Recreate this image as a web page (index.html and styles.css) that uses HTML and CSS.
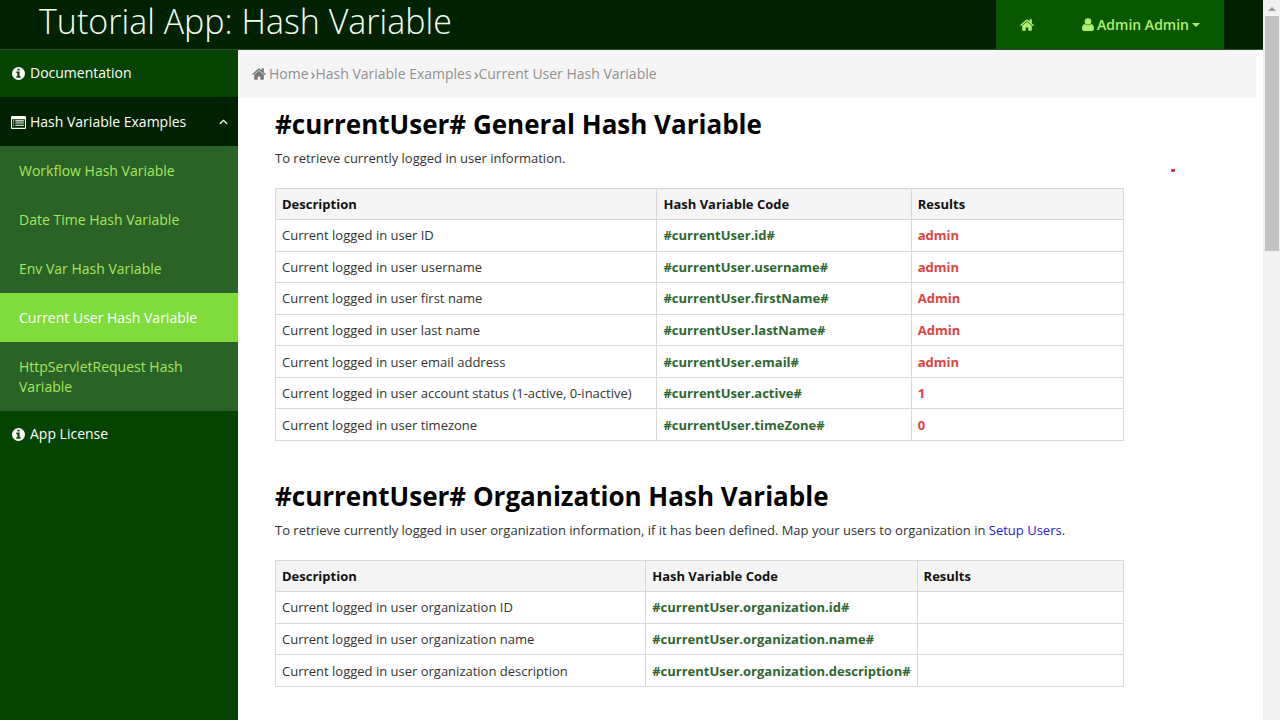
FILE: index.html
```html
<!DOCTYPE html>
<html lang="en">
<head>
  <meta charset="UTF-8" />
  <meta name="viewport" content="width=device-width, initial-scale=1.0"/>
  <title>Tutorial App: Hash Variable</title>
  <link rel="stylesheet" href="styles.css">
</head>
<body>
  <!-- Shared icons -->
  <svg class="sprite" aria-hidden="true">
    <symbol id="icon-home" viewBox="0 0 14 12">
      <path d="M7 2.800 2.200 6.800V11.200c0 .3.2.5.5.5h3V8.400h2.600v3.300h3c.3 0 .5-.2.5-.5V6.800z"/>
      <path d="M13.800 5.900 11.800 4.200V.6c0-.2-.1-.3-.3-.3H9.900c-.2 0-.3.1-.3.3v1.700L7.800.8c-.5-.4-1.100-.4-1.600 0L.2 5.900c-.1.1-.2.3 0 .4l.5.6c.1.1.3.1.4 0L7 2.100l5.900 4.800c.1.1.3.1.4 0l.5-.6c.1-.1.1-.3 0-.4z"/>
    </symbol>
    <symbol id="icon-info" viewBox="0 0 12 12">
      <path fill-rule="evenodd" d="M6 0a6 6 0 1 0 0 12A6 6 0 0 0 6 0zM5 1.600h2v1.600H5zM4 4.200h3v4.400h1V10H4V8.600h1V5.600H4z"/>
    </symbol>
    <symbol id="icon-list" viewBox="0 0 14 12">
      <path fill-rule="evenodd" d="M1.200 0h11.600C13.500 0 14 .5 14 1.200v9.600c0 .7-.5 1.200-1.200 1.200H1.200C.5 12 0 11.500 0 10.800V1.200C0 .5.5 0 1.200 0zM1 3v7.700c0 .2.1.3.3.3h11.400c.2 0 .3-.1.3-.3V3z"/>
      <path d="M2 4h1v1H2zM4 4h8v1H4zM2 6h1v1H2zM4 6h8v1H4zM2 8h1v1H2zM4 8h8v1H4z"/>
    </symbol>
    <symbol id="icon-user" viewBox="0 0 12 13">
      <circle cx="6" cy="3.500" r="3.300"/>
      <path d="M3 6c-2.100.3-3 2.200-3 4.600C0 12 .9 13 2.200 13h7.600c1.300 0 2.200-1 2.200-2.400C12 8.200 11.100 6.300 9 6c-.8.8-1.800 1.200-3 1.200S3.800 6.800 3 6z"/>
    </symbol>
  </svg>

  <div class="page">
    <header class="topbar">
      <h1>Tutorial App: Hash Variable</h1>
      <nav class="user-nav">
        <a href="#" class="home-link" aria-label="Home"><svg class="icon icon-wide"><use href="#icon-home"/></svg></a>
        <button type="button" class="user-btn">
          <svg class="icon icon-user"><use href="#icon-user"/></svg>
          Admin Admin
          <span class="caret"></span>
        </button>
      </nav>
    </header>

    <div class="layout">
      <!-- Sidebar -->
      <nav class="sidebar">
        <a href="#" class="menu-item"><svg class="icon icon-info"><use href="#icon-info"/></svg>Documentation</a>
        <button type="button" class="menu-item menu-open" aria-expanded="true">
          <svg class="icon icon-list"><use href="#icon-list"/></svg>Hash Variable Examples
          <svg class="chevron" viewBox="0 0 10 6"><path d="M1 5 5 1.200 9 5"/></svg>
        </button>
        <div class="submenu">
          <a href="#">Workflow Hash Variable</a>
          <a href="#">Date Time Hash Variable</a>
          <a href="#">Env Var Hash Variable</a>
          <a href="#" class="active">Current User Hash Variable</a>
          <a href="#">HttpServletRequest Hash Variable</a>
        </div>
        <a href="#" class="menu-item"><svg class="icon icon-info"><use href="#icon-info"/></svg>App License</a>
      </nav>

      <main class="main">
        <nav class="breadcrumb">
          <svg class="icon icon-wide"><use href="#icon-home"/></svg>
          <a href="#">Home</a><span class="sep">›</span><a href="#">Hash Variable Examples</a><span class="sep">›</span><a href="#">Current User Hash Variable</a>
        </nav>

        <section class="section">
          <h2>#currentUser# General Hash Variable</h2>
          <p>To retrieve currently logged in user information.</p>
          <table class="general">
            <thead>
              <tr><th>Description</th><th>Hash Variable Code</th><th>Results</th></tr>
            </thead>
            <tbody>
              <tr><td>Current logged in user ID</td><td class="code">#currentUser.id#</td><td class="result">admin</td></tr>
              <tr><td>Current logged in user username</td><td class="code">#currentUser.username#</td><td class="result">admin</td></tr>
              <tr><td>Current logged in user first name</td><td class="code">#currentUser.firstName#</td><td class="result">Admin</td></tr>
              <tr><td>Current logged in user last name</td><td class="code">#currentUser.lastName#</td><td class="result">Admin</td></tr>
              <tr><td>Current logged in user email address</td><td class="code">#currentUser.email#</td><td class="result">admin</td></tr>
              <tr><td>Current logged in user account status (1-active, 0-inactive)</td><td class="code">#currentUser.active#</td><td class="result">1</td></tr>
              <tr><td>Current logged in user timezone</td><td class="code">#currentUser.timeZone#</td><td class="result">0</td></tr>
            </tbody>
          </table>
          <span class="marker"></span>
        </section>

        <section class="section">
          <h2>#currentUser# Organization Hash Variable</h2>
          <p>To retrieve currently logged in user organization information, if it has been defined. Map your users to organization in <a href="#">Setup Users</a>.</p>
          <table class="organization">
            <thead>
              <tr><th>Description</th><th>Hash Variable Code</th><th>Results</th></tr>
            </thead>
            <tbody>
              <tr><td>Current logged in user organization ID</td><td class="code">#currentUser.organization.id#</td><td class="result"></td></tr>
              <tr><td>Current logged in user organization name</td><td class="code">#currentUser.organization.name#</td><td class="result"></td></tr>
              <tr><td>Current logged in user organization description</td><td class="code">#currentUser.organization.description#</td><td class="result"></td></tr>
            </tbody>
          </table>
        </section>
      </main>
    </div>
  </div>

  <div class="scrollbar">
    <span class="scroll-arrow"></span>
    <span class="scroll-thumb"></span>
  </div>
</body>
</html>
```

FILE: styles.css
```css
:root {
  --darkest: #002200;
  --dark: #044400;
  --nav: #085800;
  --submenu: #2b6228;
  --lime: #a6e65c;
  --active: #80dc3c;
  --grey: #f5f5f5;
  --border: #d8d8d8;
}

* {
  box-sizing: border-box;
}

body {
  margin: 0;
  display: flex;
  height: 100vh;
  overflow: hidden;
  font-family: 'Open Sans', sans-serif;
  font-size: 14px;
  line-height: 20px;
  color: #333;
  background: #fff;
}

a {
  color: inherit;
  text-decoration: none;
}

button {
  border: none;
  font: inherit;
  cursor: pointer;
}

.sprite {
  display: none;
}

.icon {
  width: 12px;
  height: 12px;
  fill: currentColor;
  flex: none;
}

.icon-wide {
  width: 14px;
}

.icon-info {
  width: 13px;
  height: 13px;
}

.icon-list {
  width: 15px;
  height: 13px;
}

.page {
  flex: 1;
  min-width: 0;
  display: flex;
  flex-direction: column;
}

/* Top bar */
.topbar {
  display: flex;
  justify-content: space-between;
  height: 50px;
  padding: 0 39px;
  background: var(--darkest);
  border-bottom: 1px solid #2b4a2b;
  flex: none;
}

.topbar h1 {
  margin: 0;
  font-size: 34px;
  font-weight: 300;
  line-height: 42px;
  color: #f4fff0;
}

.user-nav {
  display: flex;
  background: var(--nav);
  color: #b0f070;
  font-weight: 600;
}

.home-link,
.user-btn {
  display: flex;
  align-items: center;
  padding: 0 24px;
}

.user-btn {
  gap: 3px;
  background: none;
  color: inherit;
}

.user-nav .icon-user {
  height: 13px;
}

.caret {
  border: 4px solid transparent;
  border-top-color: currentColor;
  border-bottom: none;
}

/* Sidebar */
.layout {
  flex: 1;
  display: flex;
}

.sidebar {
  width: 238px;
  flex: none;
  background: var(--dark);
  color: #fff;
}

.menu-item {
  display: flex;
  align-items: center;
  width: 100%;
  gap: 5px;
  padding: 13px 10px 14px 12px;
  background: none;
  color: inherit;
}

.menu-open {
  gap: 4px;
  padding: 15px 10px 14px 11px;
  background: var(--darkest);
}

.chevron {
  width: 9px;
  height: 6px;
  margin-left: auto;
  fill: none;
  stroke: currentColor;
  stroke-width: 1.5;
}

.submenu {
  background: var(--submenu);
  color: var(--lime);
}

.submenu a {
  display: block;
  padding: 15px 19px 14px;
}

.submenu .active {
  background: var(--active);
  color: #fff;
}

/* Content */
.main {
  flex: 1;
  min-width: 0;
}

.breadcrumb {
  display: flex;
  align-items: center;
  height: 48px;
  margin-right: 7px;
  padding-left: 14px;
  background: var(--grey);
  color: #909090;
}

.breadcrumb .icon {
  margin-right: 3px;
  fill: #777;
}

.sep {
  margin-left: 2px;
  font-size: 16px;
  color: #777;
}

.section {
  position: relative;
  padding: 7px 45px 29px 37px;
}

.section h2 {
  margin: 0;
  font-size: 26px;
  line-height: 38px;
  color: #000;
}

.section p {
  margin: 6px 0 21px;
  font-size: 13px;
  line-height: 18px;
}

.section p a {
  color: #2222cc;
}

table {
  width: 90%;
  border-collapse: collapse;
  font-size: 13px;
  line-height: 18px;
}

.general {
  height: 253px;
}

.organization {
  height: 127px;
}

th,
td {
  padding: 5px 6px;
  border: 1px solid var(--border);
  text-align: left;
}

th {
  padding: 6px;
  background: var(--grey);
  color: #111;
}

th:nth-child(1) {
  width: 45%;
}

th:nth-child(2) {
  width: 30%;
}

th:nth-child(3) {
  width: 25%;
}

.code {
  color: #2f6632;
  font-weight: 700;
}

.result {
  color: #dc4444;
  font-weight: 700;
}

.marker {
  position: absolute;
  top: 71px;
  right: 88px;
  width: 4px;
  height: 3px;
  border-radius: 1px;
  background: #d83040;
}

/* Scrollbar */
.scrollbar {
  display: flex;
  flex-direction: column;
  align-items: center;
  width: 17px;
  background: #f1f1f1;
}

.scroll-arrow {
  margin: 7px 0 5px;
  border: 4px solid transparent;
  border-top: none;
  border-bottom-color: #999;
}

.scroll-thumb {
  width: 14px;
  height: 235px;
  background: #c1c1c1;
}
```
